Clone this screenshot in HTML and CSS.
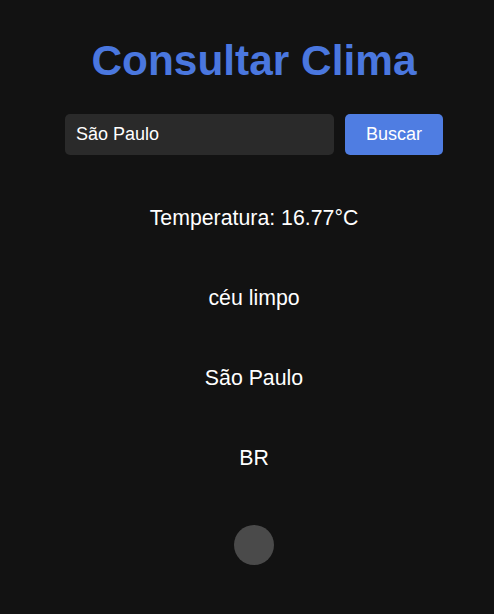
FILE: index.html
```html
<!DOCTYPE html>
<html lang="pt-BR">
<head>
<meta charset="utf-8">
<title>Consultar Clima</title>
<link rel="stylesheet" href="styles.css">
</head>
<body>
<main class="app">
  <h1 class="title">Consultar Clima</h1>
  <form class="search">
    <input class="search-input" type="text" value="São Paulo">
    <button class="search-btn" type="button">Buscar</button>
  </form>
  <section class="results">
    <p class="result">Temperatura: 16.77°C</p>
    <p class="result">céu limpo</p>
    <p class="result">São Paulo</p>
    <p class="result">BR</p>
    <div class="icon"></div>
  </section>
</main>
</body>
</html>
```
FILE: styles.css
```css
html, body {
  margin: 0;
  padding: 0;
  background: #121212;
}
body {
  font-family: "Liberation Sans", Arial, sans-serif;
  color: #ffffff;
  padding-left: 14px;
}
.app {
  display: flex;
  flex-direction: column;
  align-items: center;
  padding-top: 37px;
}
.title {
  margin: 0;
  font-size: 42.4px;
  line-height: 47px;
  font-weight: bold;
  color: #4a77df;
}
.search {
  display: flex;
  gap: 11px;
  margin-top: 30px;
}
.search-input {
  width: 269px;
  height: 41px;
  box-sizing: border-box;
  border: none;
  border-radius: 5px;
  background: #2a2a2a;
  color: #ffffff;
  font-family: inherit;
  font-size: 18px;
  padding: 0 11px;
  outline: none;
}
.search-btn {
  width: 98px;
  height: 41px;
  border: none;
  border-radius: 5px;
  background: #4f7de2;
  color: #ffffff;
  font-family: inherit;
  font-size: 18px;
}
.results {
  display: flex;
  flex-direction: column;
  align-items: center;
  margin-top: 51px;
}
.result {
  margin: 0 0 56px;
  font-size: 21.3px;
  line-height: 24px;
}
.icon {
  width: 40px;
  height: 40px;
  border-radius: 50%;
  background: #4a4a4a;
  margin-top: -1px;
}
```
